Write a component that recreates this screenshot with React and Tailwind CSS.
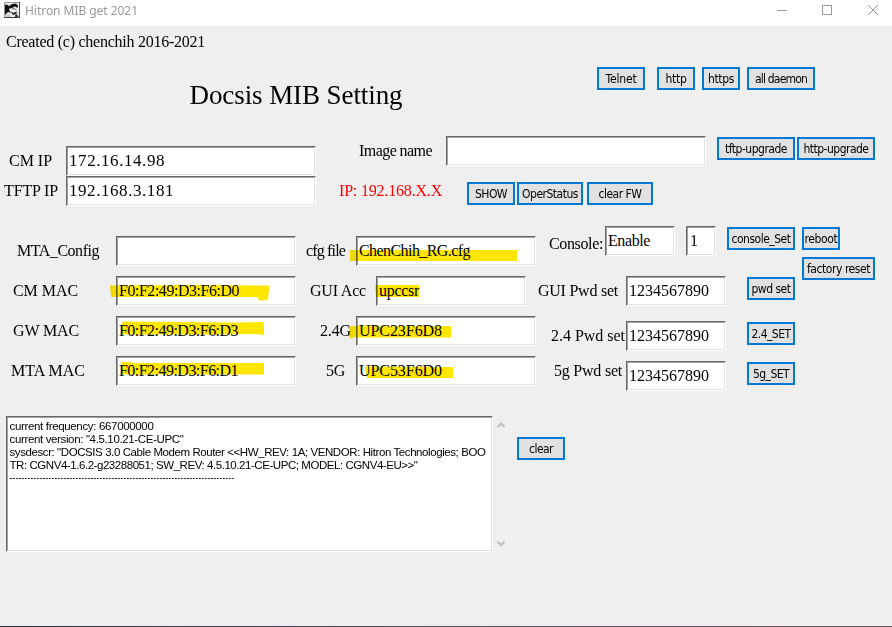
import { useLayoutEffect, useRef, useState } from "react";
import clsx from "clsx";

const SERIF = "font-['Liberation_Serif',serif]";
const UI = "font-['Noto_Sans','Open_Sans',sans-serif]";

// Single line of text whose letter spacing is adjusted to fill `w` pixels.
function Fit({ w, children }) {
  const ref = useRef(null);
  const [spacing, setSpacing] = useState(0);
  useLayoutEffect(() => {
    const natural = ref.current.getBoundingClientRect().width;
    const count = ref.current.textContent.length;
    setSpacing((w - natural) / count);
  }, [w]);
  return (
    <span ref={ref} className="inline-block whitespace-pre" style={{ letterSpacing: spacing + "px" }}>
      {children}
    </span>
  );
}

function Label({ w, className, children }) {
  return (
    <div className={clsx("h-[30px] shrink-0 text-[16px] leading-[30px]", SERIF, className)}>
      <Fit w={w}>{children}</Fit>
    </div>
  );
}

function Sunken({ className, children }) {
  return (
    <div className={clsx("shrink-0 border border-t-[#696969] border-l-[#696969] border-r-white border-b-white", className)}>
      <div className="h-full border border-t-[#a0a0a0] border-l-[#a0a0a0] border-r-[#e3e3e3] border-b-[#e3e3e3] bg-white">
        {children}
      </div>
    </div>
  );
}

// `mark` is the outline of a highlighter stroke, relative to the field.
function Entry({ className, w, large, mark, children }) {
  return (
    <div className={clsx("relative h-[30px] shrink-0", className)}>
      <Sunken className="h-full w-full">
        <div className={clsx("pl-px leading-[26px]", large ? "text-[17px]" : "text-[16px]", SERIF)}>
          {w ? <Fit w={w}>{children}</Fit> : children}
        </div>
      </Sunken>
      {mark && (
        <svg className="absolute top-0 left-0 h-[30px] w-full overflow-visible mix-blend-multiply" aria-hidden="true">
          <path d={mark} fill="#ffe600" />
        </svg>
      )}
    </div>
  );
}

function Btn({ className, w, children }) {
  return (
    <button
      className={clsx(
        "flex h-[23px] shrink-0 items-center justify-center border-2 border-[#0078d7] bg-[#e1e1e1] pt-px font-['DejaVu_Sans_Condensed','DejaVu_Sans',sans-serif] text-[12px] leading-none text-black",
        className
      )}
    >
      <Fit w={w}>{children}</Fit>
    </button>
  );
}

function TitleBar() {
  return (
    <header className="flex h-[26px] items-start bg-white text-[#999]">
      <svg className="mt-[2px] ml-[4px]" width="16" height="16" viewBox="0 0 16 16">
        <rect width="16" height="16" fill="#444" />
        <rect x="1" y="1" width="14" height="14" fill="#efefef" />
        <path d="M0 0H15V1H1V15H0Z" fill="#999" />
        <path d="M1 2.5L4 3L6 5.5L5 8L7 11L4 10L1 13Z" fill="#111" />
        <path d="M5 4L8 2L12 1.5L14 3.5L13.5 6L11 4.5L8 6L6 6.5Z" fill="#111" />
        <path d="M8 7L10 6.5L12.5 8" stroke="#666" fill="none" />
        <path d="M7 9L9 11L12.5 9.5L13 11L10 13L8 12Z" fill="#222" />
        <path d="M11 13L13 12L14.5 15H11Z" fill="#333" />
        <path d="M2 13L5 12L7 15H2Z" fill="#c4c4c4" />
      </svg>
      <div className={clsx("ml-[5px] h-[22px] text-[12px] leading-[21px]", UI)}>
        <Fit w={113}>Hitron MIB get 2021</Fit>
      </div>
      <svg className="mr-[14px] ml-auto" width="101" height="22" fill="none" stroke="#999" shapeRendering="crispEdges">
        <path d="M0 10.5H10M45.5 5.5H54.5V14.5H45.5Z" />
        <path d="M91 5L101 15M101 5L91 15" shapeRendering="auto" />
      </svg>
    </header>
  );
}

const LOG = [
  [144, "current frequency: 667000000"],
  [174, "current version: \"4.5.10.21-CE-UPC\""],
  [476, "sysdescr: \"DOCSIS 3.0 Cable Modem Router <<HW_REV: 1A; VENDOR: Hitron Technologies; BOO"],
  [408, "TR: CGNV4-1.6.2-g23288051; SW_REV: 4.5.10.21-CE-UPC; MODEL: CGNV4-EU>>\""],
];

export default function App() {
  return (
    <div className="flex h-[627px] w-[892px] flex-col overflow-hidden bg-[#efefef] text-black">
      <TitleBar />

      <section className="flex h-[110px]">
        <div className="w-[597px] pt-px pl-[6px]">
          <Label w={199}>Created (c) chenchih 2016-2021</Label>
          <div className={clsx("mt-[18px] ml-[183.5px] h-[40px] text-[27px] leading-[40px]", SERIF)}>
            <Fit w={213}>Docsis MIB Setting</Fit>
          </div>
        </div>
        <div className="flex pt-[41px]">
          <Btn className="w-[48px]" w={31}>Telnet</Btn>
          <Btn className="ml-[12px] w-[38px]" w={21}>http</Btn>
          <Btn className="ml-[7px] w-[38px]" w={26}>https</Btn>
          <Btn className="ml-[7px] w-[68px]" w={52}>all daemon</Btn>
        </div>
      </section>

      <section className="flex h-[90px]">
        <div className="w-[316px] pt-[10px]">
          <div className="flex">
            <Label className="w-[66px] pl-[9px]" w={43}>CM IP</Label>
            <Entry className="w-[250px]" large w={96}>172.16.14.98</Entry>
          </div>
          <div className="flex">
            <Label className="w-[66px] pl-[4px]" w={54}>TFTP IP</Label>
            <Entry className="w-[250px]" large w={105}>192.168.3.181</Entry>
          </div>
        </div>
        <div>
          <div className="flex">
            <Label className="w-[130px] pl-[43px]" w={73}>Image name</Label>
            <Entry className="w-[260px]" />
            <Btn className="mt-px ml-[11px] w-[78px]" w={62}>tftp-upgrade</Btn>
            <Btn className="mt-px ml-[2px] w-[78px]" w={65}>http-upgrade</Btn>
          </div>
          <div className="flex pt-[10px]">
            <Label className="w-[151px] pl-[23px] text-[#ff0000]" w={103}>IP: 192.168.X.X</Label>
            <Btn className="mt-[6px] w-[48px]" w={32}>SHOW</Btn>
            <Btn className="mt-[6px] ml-[2px] w-[66px]" w={56}>OperStatus</Btn>
            <Btn className="mt-[6px] ml-[4px] w-[66px]" w={43}>clear FW</Btn>
          </div>
        </div>
      </section>

      <section className="flex h-[190px]">
        <div className="flex w-[296px] flex-col gap-[10px] pt-[10px]">
          <div className="flex">
            <Label className="w-[116px] pl-[17px]" w={82}>MTA_Config</Label>
            <Entry className="w-[180px]" />
          </div>
          <div className="flex">
            <Label className="w-[116px] pl-[13px]" w={65}>CM MAC</Label>
            <Entry className="w-[180px]" w={120} mark="M-6 9.5L80 9L153 9.5V13L152 24L143 24.5L141 21H-5Z">F0:F2:49:D3:F6:D0</Entry>
          </div>
          <div className="flex">
            <Label className="w-[116px] pl-[13px]" w={66}>GW MAC</Label>
            <Entry className="w-[180px]" w={119} mark="M6 7L7 5.5L120 6.5L147 6L148 8V19L140 18L100 18.5H6Z">F0:F2:49:D3:F6:D3</Entry>
          </div>
          <div className="flex">
            <Label className="w-[116px] pl-[11px]" w={74}>MTA MAC</Label>
            <Entry className="w-[180px]" w={119} mark="M5 6L12 6L20 7L148 7V18.5L80 18.5L6 18.5Z">F0:F2:49:D3:F6:D1</Entry>
          </div>
        </div>

        <div className="flex w-[240px] flex-col gap-[10px] pt-[10px]">
          <div className="flex">
            <Label className="w-[60px] pl-[10px]" w={39}>cfg file</Label>
            <Entry className="w-[180px]" w={111} mark="M-6 14L161 14V25L100 25H-6Z">ChenChih_RG.cfg</Entry>
          </div>
          <div className="flex">
            <Label className="w-[80px] pl-[14px]" w={56}>GUI Acc</Label>
            <Entry className="w-[150px]" w={40} mark="M-1 9H43V21H0Z">upccsr</Entry>
          </div>
          <div className="flex">
            <Label className="w-[60px] pl-[24px]" w={31}>2.4G</Label>
            <Entry className="w-[180px]" w={83} mark="M-7 10.5L5 9.5L40 10H95V21.5H-2L-6 22.5Z">UPC23F6D8</Entry>
          </div>
          <div className="flex">
            <Label className="w-[60px] pl-[30px]" w={19}>5G</Label>
            <Entry className="w-[180px]" w={83} mark="M9 10.5L90 11H97V22L11 22Z">UPC53F6D0</Entry>
          </div>
        </div>

        <div className="w-[266px]">
          <div className="flex h-[50px]">
            <Label className="mt-[3px] w-[69px] pl-[13px]" w={54}>Console:</Label>
            <Entry className="w-[70px]" w={42}>Enable</Entry>
            <Entry className="ml-[11px] w-[30px]"><span className="pl-px">1</span></Entry>
            <Btn className="mt-px ml-[11px] w-[68px]" w={59}>console_Set</Btn>
          </div>
          <div className="flex h-[45px]">
            <Label className="w-[90px] pl-[2px]" w={80}>GUI Pwd set</Label>
            <Entry className="w-[100px]" w={80}>1234567890</Entry>
            <Btn className="mt-px ml-[21px] w-[48px]" w={39}>pwd set</Btn>
          </div>
          <div className="flex h-[40px]">
            <Label className="w-[90px] pl-[15px]" w={74}>2.4 Pwd set</Label>
            <Entry className="w-[100px]" w={80}>1234567890</Entry>
            <Btn className="mt-px ml-[21px] w-[48px]" w={39}>2.4_SET</Btn>
          </div>
          <div className="flex">
            <Label className="-mt-[5px] w-[90px] pl-[18px]" w={68}>5g Pwd set</Label>
            <Entry className="w-[100px]" w={80}>1234567890</Entry>
            <Btn className="mt-px ml-[21px] w-[48px]" w={36}>5g_SET</Btn>
          </div>
        </div>

        <div className="flex flex-col items-start gap-[7px] pt-px">
          <Btn className="w-[38px]" w={33}>reboot</Btn>
          <Btn className="w-[73px]" w={63}>factory reset</Btn>
        </div>
      </section>

      <section className="flex h-[136px] pl-[6px]">
        <Sunken className="h-[136px] w-[487px]">
          <div className="pt-[2px] pl-[1.5px] font-['Liberation_Sans',sans-serif] text-[11.5px] leading-[13px]">
            {LOG.map(([w, line], i) => (
              <div key={i} className="h-[13px]">
                <Fit w={w}>{line}</Fit>
              </div>
            ))}
            <div className="h-[13px] text-[8px] leading-[12px] font-bold">
              <Fit w={225}>{"-".repeat(75)}</Fit>
            </div>
          </div>
        </Sunken>
        <svg className="ml-[4px]" width="8" height="136" fill="none" stroke="#bfbfbf" strokeWidth="2">
          <path d="M0.5 11L4 7.5L7.5 11M0.5 125.5L4 129L7.5 125.5" />
        </svg>
        <Btn className="mt-[21px] ml-[12px] w-[48px]" w={24}>clear</Btn>
      </section>

      <div className="mt-auto h-px bg-gradient-to-r from-[#2b3036] via-[#545468] to-[#6b5258]" />
    </div>
  );
}
